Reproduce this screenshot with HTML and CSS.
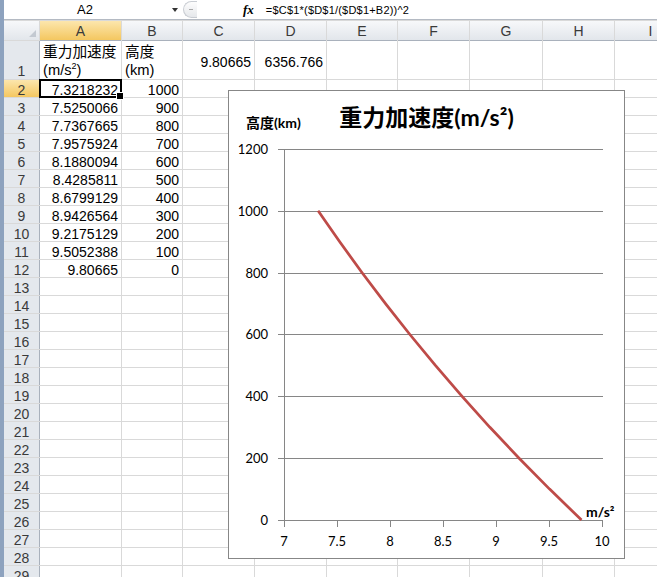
FILE: index.html
```html
<!DOCTYPE html>
<html lang="ja">
<head>
  <meta charset="UTF-8" />
  <title>重力加速度</title>
  <link rel="stylesheet" href="styles.css">
</head>
<body>

  <div class="formula-bar">
    <div class="name-box">A2</div>
    <div class="name-arrow"></div>
    <div class="splitter"></div>
    <div class="fx">fx</div>
    <div class="formula">=$C$1*($D$1/($D$1+B2))^2</div>
  </div>

  <div class="sheet">
    <div class="corner"></div><div class="ch sel">A</div><div class="ch">B</div><div class="ch">C</div><div class="ch">D</div><div class="ch">E</div><div class="ch">F</div><div class="ch">G</div><div class="ch">H</div><div class="ch">I</div>
    <div class="rh tall">1</div><div class="wrap">重力加速度<br>(m/s<sup>2</sup>)</div><div class="wrap">高度<br>(km)</div><div class="num mid">9.80665</div><div class="num mid">6356.766</div><div></div><div></div><div></div><div></div><div></div>
    <div class="rh sel">2</div><div class="num active">7.3218232</div><div class="num">1000</div><div></div><div></div><div></div><div></div><div></div><div></div><div></div>
    <div class="rh">3</div><div class="num">7.5250066</div><div class="num">900</div><div></div><div></div><div></div><div></div><div></div><div></div><div></div>
    <div class="rh">4</div><div class="num">7.7367665</div><div class="num">800</div><div></div><div></div><div></div><div></div><div></div><div></div><div></div>
    <div class="rh">5</div><div class="num">7.9575924</div><div class="num">700</div><div></div><div></div><div></div><div></div><div></div><div></div><div></div>
    <div class="rh">6</div><div class="num">8.1880094</div><div class="num">600</div><div></div><div></div><div></div><div></div><div></div><div></div><div></div>
    <div class="rh">7</div><div class="num">8.4285811</div><div class="num">500</div><div></div><div></div><div></div><div></div><div></div><div></div><div></div>
    <div class="rh">8</div><div class="num">8.6799129</div><div class="num">400</div><div></div><div></div><div></div><div></div><div></div><div></div><div></div>
    <div class="rh">9</div><div class="num">8.9426564</div><div class="num">300</div><div></div><div></div><div></div><div></div><div></div><div></div><div></div>
    <div class="rh">10</div><div class="num">9.2175129</div><div class="num">200</div><div></div><div></div><div></div><div></div><div></div><div></div><div></div>
    <div class="rh">11</div><div class="num">9.5052388</div><div class="num">100</div><div></div><div></div><div></div><div></div><div></div><div></div><div></div>
    <div class="rh">12</div><div class="num">9.80665</div><div class="num">0</div><div></div><div></div><div></div><div></div><div></div><div></div><div></div>
    <div class="rh">13</div><div></div><div></div><div></div><div></div><div></div><div></div><div></div><div></div><div></div>
    <div class="rh">14</div><div></div><div></div><div></div><div></div><div></div><div></div><div></div><div></div><div></div>
    <div class="rh">15</div><div></div><div></div><div></div><div></div><div></div><div></div><div></div><div></div><div></div>
    <div class="rh">16</div><div></div><div></div><div></div><div></div><div></div><div></div><div></div><div></div><div></div>
    <div class="rh">17</div><div></div><div></div><div></div><div></div><div></div><div></div><div></div><div></div><div></div>
    <div class="rh">18</div><div></div><div></div><div></div><div></div><div></div><div></div><div></div><div></div><div></div>
    <div class="rh">19</div><div></div><div></div><div></div><div></div><div></div><div></div><div></div><div></div><div></div>
    <div class="rh">20</div><div></div><div></div><div></div><div></div><div></div><div></div><div></div><div></div><div></div>
    <div class="rh">21</div><div></div><div></div><div></div><div></div><div></div><div></div><div></div><div></div><div></div>
    <div class="rh">22</div><div></div><div></div><div></div><div></div><div></div><div></div><div></div><div></div><div></div>
    <div class="rh">23</div><div></div><div></div><div></div><div></div><div></div><div></div><div></div><div></div><div></div>
    <div class="rh">24</div><div></div><div></div><div></div><div></div><div></div><div></div><div></div><div></div><div></div>
    <div class="rh">25</div><div></div><div></div><div></div><div></div><div></div><div></div><div></div><div></div><div></div>
    <div class="rh">26</div><div></div><div></div><div></div><div></div><div></div><div></div><div></div><div></div><div></div>
    <div class="rh">27</div><div></div><div></div><div></div><div></div><div></div><div></div><div></div><div></div><div></div>
    <div class="rh">28</div><div></div><div></div><div></div><div></div><div></div><div></div><div></div><div></div><div></div>
    <div class="rh">29</div><div></div><div></div><div></div><div></div><div></div><div></div><div></div><div></div><div></div>

    <!-- chart floats over the cells -->
    <div class="chart">
      <svg width="395" height="467" viewBox="0 0 395 467">
        <text class="title" x="197.5" y="35" text-anchor="middle">重力加速度(m/s²)</text>
        <text class="axis-title" x="17" y="37">高度(km)</text>

        <g class="grid">
          <line x1="49" x2="374" y1="58.5" y2="58.5" />
          <line x1="49" x2="374" y1="120.5" y2="120.5" />
          <line x1="49" x2="374" y1="182.5" y2="182.5" />
          <line x1="49" x2="374" y1="243.5" y2="243.5" />
          <line x1="49" x2="374" y1="305.5" y2="305.5" />
          <line x1="49" x2="374" y1="367.5" y2="367.5" />
          <line x1="49" x2="374" y1="429.5" y2="429.5" />
          <line x1="55.5" x2="55.5" y1="58" y2="436" />
          <line x1="108.5" x2="108.5" y1="429" y2="436" />
          <line x1="161.5" x2="161.5" y1="429" y2="436" />
          <line x1="214.5" x2="214.5" y1="429" y2="436" />
          <line x1="267.5" x2="267.5" y1="429" y2="436" />
          <line x1="320.5" x2="320.5" y1="429" y2="436" />
          <line x1="373.5" x2="373.5" y1="429" y2="436" />
        </g>

        <g class="tick-label" text-anchor="end">
          <text x="39" y="63">1200</text>
          <text x="39" y="125">1000</text>
          <text x="39" y="187">800</text>
          <text x="39" y="248">600</text>
          <text x="39" y="310">400</text>
          <text x="39" y="372">200</text>
          <text x="39" y="434">0</text>
        </g>

        <g class="tick-label" text-anchor="middle">
          <text x="55" y="455">7</text>
          <text x="108" y="455">7.5</text>
          <text x="161" y="455">8</text>
          <text x="214" y="455">8.5</text>
          <text x="267" y="455">9</text>
          <text x="320" y="455">9.5</text>
          <text x="373" y="455">10</text>
        </g>

        <polyline class="curve" points="89.1,119.8 110.7,150.8 133.1,181.7 156.5,212.6 180.9,243.5 206.4,274.4 233.1,305.3 260.9,336.3 290.1,367.2 320.6,398.1 352.5,429" />

        <text class="axis-title" x="357" y="426">m/s²</text>
      </svg>
    </div>
  </div>

</body>
</html>
```

FILE: styles.css
```css
* {
  box-sizing: border-box;
}

body {
  margin: 0;
  height: 577px;
  overflow: hidden;
  background: #fff;
  border-left: 4px solid #8da2be;
  font-family: "Liberation Sans", "Noto Sans CJK JP", sans-serif;
  font-size: 14px;
  color: #000;
}

/* formula bar */

.formula-bar {
  display: flex;
  align-items: center;
  height: 20px;
  border-bottom: 1px solid #b4bac3;
  font-size: 13px;
}

.name-box {
  width: 162px;
  text-align: center;
}

.name-arrow {
  margin-left: 6px;
  width: 0;
  height: 0;
  border-left: 3px solid transparent;
  border-right: 3px solid transparent;
  border-top: 4px solid #333;
}

.splitter {
  display: flex;
  align-items: center;
  margin-left: 5px;
  width: 14px;
  height: 17px;
  border: 1px solid #c9cdd3;
  border-right: none;
  border-radius: 9px 0 0 9px;
  background: linear-gradient(#fdfdfd, #e6e8eb);
}

.splitter::after {
  content: "";
  margin-left: 5px;
  width: 4px;
  height: 1px;
  background: #a8a8a8;
}

.fx {
  margin-left: 46px;
  font-family: "Liberation Serif", serif;
  font-style: italic;
  font-weight: bold;
  font-size: 13px;
}

.formula {
  margin-left: 12px;
  font-size: 11px;
  letter-spacing: 0.2px;
}

/* sheet grid */

.sheet {
  position: relative;
  display: grid;
  grid-template-columns: 35px 81px 60px 71px 71px 70px 71px 72px 71px 71px;
  grid-template-rows: 19px 38px repeat(28, 17px);
  gap: 1px;
  padding-top: 1px;
  background: #d9d9d9;
  width: max-content;
}

.sheet > div {
  background: #fff;
  padding: 2px 3px 0;
  line-height: 17px;
  white-space: nowrap;
  overflow: hidden;
}

.sheet > .corner {
  display: flex;
  align-items: flex-end;
  justify-content: flex-end;
  padding: 0 3px 3px 0;
  background: linear-gradient(#f7f8fa, #e2e6eb);
}

.corner::after {
  content: "";
  width: 0;
  height: 0;
  border-left: 7px solid transparent;
  border-bottom: 7px solid #c3c9d1;
}

.sheet > .ch {
  background: linear-gradient(#f7f8fa, #e2e6eb);
  color: #3a3a3a;
  text-align: center;
  box-shadow: 0 1px 0 #a9b1bc;
}

.sheet > .rh {
  background: #e4e8ed;
  color: #3a3a3a;
  text-align: center;
  box-shadow: 1px 0 0 #a9b1bc;
}

.sheet > .sel {
  background: linear-gradient(#fce6ad, #f4c760);
}

.num {
  text-align: right;
}

.sheet > .wrap {
  white-space: normal;
  font-size: 14.7px;
  line-height: 18px;
}

.wrap sup {
  font-size: 9px;
  line-height: 0;
}

.sheet > .mid {
  padding-top: 13px;
}

.sheet > .tall {
  padding-top: 22px;
}

.sheet > .active {
  position: relative;
  overflow: visible;
  outline: 2px solid #000;
  outline-offset: -1px;
}

.active::after {
  content: "";
  position: absolute;
  right: -3px;
  bottom: -3px;
  width: 6px;
  height: 6px;
  background: #000;
  border: 1px solid #fff;
}

/* chart */

.sheet > .chart {
  position: absolute;
  left: 224px;
  top: 70px;
  width: 397px;
  height: 469px;
  padding: 0;
  border: 1px solid #878787;
  background: #fff;
}

.chart svg {
  display: block;
  font-family: Lato, "Noto Sans CJK JP", sans-serif;
}

.grid line {
  stroke: #868686;
  stroke-width: 1;
}

.tick-label {
  font-size: 13px;
  fill: #000;
}

.title {
  font-size: 23px;
  font-weight: bold;
}

.axis-title {
  font-size: 14px;
  font-weight: bold;
}

.curve {
  fill: none;
  stroke: #be4b48;
  stroke-width: 2.75;
  stroke-linejoin: round;
}
```
